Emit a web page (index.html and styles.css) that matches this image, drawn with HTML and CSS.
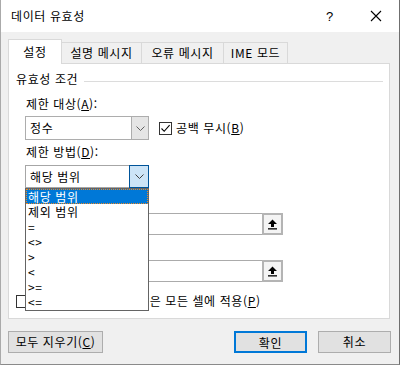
FILE: index.html
```html
<!DOCTYPE html>
<html lang="ko">
<head>
    <meta charset="UTF-8" />
    <title>데이터 유효성</title>
    <link rel="stylesheet" href="styles.css">
</head>
<body>
    <div class="dialog">
        <header class="titlebar">
            <span class="title">데이터 유효성</span>
            <span class="help">?</span>
            <span class="close">
                <svg width="12" height="12" viewBox="0 0 12 12"><path d="M1 1 L11 11 M11 1 L1 11" stroke="#000" stroke-width="1.1" fill="none"/></svg>
            </span>
        </header>

        <div class="content">
            <nav class="tabs">
                <div class="tab active" style="width:54px">설정</div>
                <div class="tab" style="width:81px">설명 메시지</div>
                <div class="tab" style="width:83px">오류 메시지</div>
                <div class="tab" style="width:65px">IME 모드</div>
            </nav>

            <section class="panel">
                <div class="group-title">
                    <span>유효성 조건</span>
                    <span class="rule"></span>
                </div>

                <div class="label first">제한 대상(<u>A</u>):</div>
                <div class="row">
                    <div class="combo">
                        <span class="combo-text">정수</span>
                        <span class="combo-btn">
                            <svg width="9" height="5" viewBox="0 0 9 5"><path d="M0.5 0.5 L4.5 4.5 L8.5 0.5" stroke="#606060" fill="none"/></svg>
                        </span>
                    </div>
                    <label class="check">
                        <span class="box">
                            <svg width="11" height="11" viewBox="0 0 11 11"><path d="M1.5 5.5 L4.2 8.3 L9.6 2.2" stroke="#000" stroke-width="1.1" fill="none"/></svg>
                        </span>
                        공백 무시(<u>B</u>)
                    </label>
                </div>

                <div class="label">제한 방법(<u>D</u>):</div>
                <div class="combo-wrap">
                    <div class="combo open">
                        <span class="combo-text">해당 범위</span>
                        <span class="combo-btn">
                            <svg width="9" height="5" viewBox="0 0 9 5"><path d="M0.5 0.5 L4.5 4.5 L8.5 0.5" stroke="#404040" fill="none"/></svg>
                        </span>
                    </div>
                    <ul class="droplist">
                        <li class="selected">해당 범위</li>
                        <li>제외 범위</li>
                        <li>=</li>
                        <li>&lt;&gt;</li>
                        <li>&gt;</li>
                        <li>&lt;</li>
                        <li>&gt;=</li>
                        <li>&lt;=</li>
                    </ul>
                </div>

                <div class="label">최소값(<u>M</u>):</div>
                <div class="refedit">
                    <span class="ref-input"></span>
                    <span class="ref-btn">
                        <svg width="11" height="11" viewBox="0 0 11 11"><path d="M5.5 0.5 L10 5 L7 5 L7 8 L4 8 L4 5 L1 5 Z" fill="#000"/><rect x="1" y="9.2" width="9" height="1.3" fill="#000"/></svg>
                    </span>
                </div>

                <div class="label">최대값(<u>X</u>):</div>
                <div class="refedit">
                    <span class="ref-input"></span>
                    <span class="ref-btn">
                        <svg width="11" height="11" viewBox="0 0 11 11"><path d="M5.5 0.5 L10 5 L7 5 L7 8 L4 8 L4 5 L1 5 Z" fill="#000"/><rect x="1" y="9.2" width="9" height="1.3" fill="#000"/></svg>
                    </span>
                </div>

                <label class="check bottom-check">
                    <span class="box"></span>
                    변경 내용을 설정이 같은 모든 셀에 적용(<u>P</u>)
                </label>
            </section>

            <footer class="buttons">
                <button class="btn clear">모두 지우기(<u>C</u>)</button>
                <span class="spacer"></span>
                <button class="btn default">확인</button>
                <button class="btn">취소</button>
            </footer>
        </div>
    </div>
</body>
</html>
```

FILE: styles.css
```css
/* Grundlayout */
* {
    box-sizing: border-box;
}
html, body {
    margin: 0;
    padding: 0;
}
body {
    width: 400px;
    height: 365px;
    overflow: hidden;
    font-family: "Noto Sans CJK KR", "Noto Sans", sans-serif;
    font-size: 12px;
    letter-spacing: 0.6px;
    color: #000;
    background: #fff;
}
u {
    text-decoration-thickness: 1px;
    text-underline-offset: 1px;
}

.dialog {
    width: 400px;
    height: 365px;
    display: flex;
    flex-direction: column;
    background: #f0f0f0;
    border-left: 1px solid #aaaaaa;
    border-right: 1px solid #6f6f6f;
    border-bottom: 1px solid #8a8a8a;
}

/* Titelleiste */
.titlebar {
    height: 32px;
    flex: none;
    display: flex;
    align-items: center;
    background: #fff;
    padding-left: 10px;
}
.title {
    flex: 1;
    line-height: 16px;
    margin-top: -1px;
}
.help {
    width: 12px;
    font-family: "Liberation Sans", sans-serif;
    font-size: 13px;
    margin-right: 32px;
}
.close {
    width: 12px;
    height: 12px;
    margin-right: 17px;
    display: flex;
}

/* Inhalt */
.content {
    flex: 1;
    display: flex;
    flex-direction: column;
    padding: 7px 8px 0 7px;
}

/* Reiter */
.tabs {
    display: flex;
    align-items: flex-end;
    height: 24px;
    flex: none;
    position: relative;
    z-index: 1;
}
.tab {
    height: 21px;
    border: 1px solid #d9d9d9;
    border-bottom: none;
    margin-left: -1px;
    text-align: center;
    line-height: 19px;
    background: #f0f0f0;
}
.tab:first-child {
    margin-left: 0;
}
.tab.active {
    height: 25px;
    margin-bottom: -1px;
    background: #fff;
    line-height: 23px;
    position: relative;
    z-index: 2;
}

/* Seite */
.panel {
    height: 256px;
    width: 382px;
    flex: none;
    background: #fff;
    border: 1px solid #d9d9d9;
    padding: 8px 6px 0 7px;
    display: flex;
    flex-direction: column;
}
.group-title {
    display: flex;
    align-items: center;
    height: 14px;
    line-height: 14px;
}
.group-title .rule {
    flex: 1;
    height: 1px;
    background: #dcdcdc;
    margin-left: 6px;
    margin-top: 4px;
}
.label {
    margin: 5px 0 0 10px;
    height: 14px;
    line-height: 14px;
}
.label.first {
    margin-top: 11px;
}
.row {
    display: flex;
    align-items: center;
    margin-top: 5px;
}

/* Kombinationsfeld */
.combo-wrap {
    position: relative;
    margin-top: 6px;
}
.combo {
    margin-left: 9px;
    width: 124px;
    height: 24px;
    display: flex;
    border: 1px solid #adadad;
    background: #fff;
}
.combo-text {
    flex: 1;
    padding-left: 4px;
    line-height: 22px;
}
.combo-btn {
    width: 17px;
    display: flex;
    align-items: center;
    justify-content: center;
    background: #e5e5e5;
    border-left: 1px solid #adadad;
}
.combo.open {
    height: 23px;
    border-color: #a6a6a6;
}
.combo.open .combo-btn {
    width: 20px;
    background: #cce4f7;
    border: 1px solid #005499;
    margin: -1px -1px -1px 0;
}

/* Aufklappliste */
.droplist {
    position: absolute;
    left: 9px;
    top: 23px;
    width: 124px;
    margin: 0;
    padding: 0 0 1px 0;
    list-style: none;
    background: #fff;
    border: 1px solid #646464;
    z-index: 5;
}
.droplist li {
    height: 15px;
    line-height: 15px;
    padding-left: 2px;
}
.droplist li.selected {
    background: #0078d7;
    color: #fff;
    outline: 1px dotted #f08a24;
    outline-offset: -1px;
}

/* Bezugsfeld */
.refedit {
    margin: 6px 0 0 9px;
    width: 258px;
    height: 22px;
    display: flex;
    border: 1px solid #ababab;
    background: #fff;
}
.ref-input {
    flex: 1;
}
.ref-btn {
    width: 21px;
    height: 22px;
    margin: -1px -1px -1px 0;
    display: flex;
    align-items: center;
    justify-content: center;
    border: 2px solid #b4b4b4;
    background: #f4f4f4;
}

/* Kontrollkästchen */
.check {
    display: flex;
    align-items: center;
    margin-left: 10px;
    line-height: 14px;
}
.box {
    width: 13px;
    height: 13px;
    border: 1px solid #333;
    background: #fff;
    margin-right: 4px;
    display: flex;
    align-items: center;
    justify-content: center;
}
.bottom-check {
    margin: 12px 0 0 0;
}

/* Schaltflächen */
.buttons {
    display: flex;
    align-items: center;
    margin-top: 12px;
}
.spacer {
    flex: 1;
}
.btn {
    font-family: inherit;
    font-size: 12px;
    letter-spacing: 0.6px;
    height: 22px;
    width: 73px;
    padding: 0;
    background: #e1e1e1;
    border: 1px solid #adadad;
    color: #000;
    line-height: 20px;
}
.btn.clear {
    width: 95px;
}
.btn.default {
    border: 2px solid #0078d7;
    margin-right: 11px;
}
```
